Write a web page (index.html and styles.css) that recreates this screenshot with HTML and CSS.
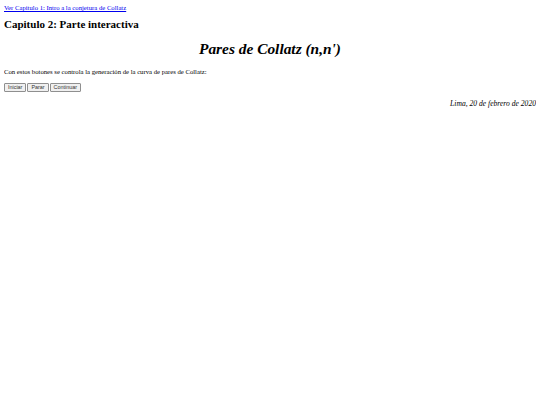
FILE: index.html
```html
<!DOCTYPE html>
<html lang="es">
<head>
<meta charset="utf-8">
<title>Collatz</title>
<link rel="stylesheet" href="styles.css">
</head>
<body>
<a class="nav" href="#">Ver Capitulo 1: Intro a la conjetura de Collatz</a>
<h2 class="chapter">Capitulo 2: Parte interactiva</h2>
<h1 class="title">Pares de Collatz (n,n')</h1>
<p class="intro">Con estos botones se controla la generación de la curva de pares de Collatz:</p>
<div class="controls">
<button class="btn">Iniciar</button>
<button class="btn">Parar</button>
<button class="btn">Continuar</button>
</div>
<p class="date">Lima, 20 de febrero de 2020</p>
</body>
</html>
```
FILE: styles.css
```css
body {
  margin: 4px;
  font-family: "Liberation Serif", serif;
  font-size: 6.7px;
  line-height: 1.15;
  color: #000;
  background: #fff;
}
.nav {
  color: #0000ee;
  text-decoration: underline;
}
.chapter {
  font-size: 11px;
  font-weight: bold;
  margin: 6px 0 0;
}
.title {
  font-size: 15.4px;
  font-style: italic;
  font-weight: bold;
  text-align: center;
  margin: 10px 0 0;
}
.intro {
  margin: 10px 0 0;
}
.controls {
  display: flex;
  gap: 1px;
  margin-top: 7px;
}
.btn {
  font-family: "Liberation Sans", sans-serif;
  font-size: 5.4px;
  line-height: 7px;
  padding: 0 3px;
  margin: 0;
  background: #f0f0f0;
  border: 1px solid #8f8f8f;
  border-radius: 1px;
  color: #333;
}
.date {
  font-size: 7.6px;
  font-style: italic;
  text-align: right;
  margin: 8px 0 0;
}
```
